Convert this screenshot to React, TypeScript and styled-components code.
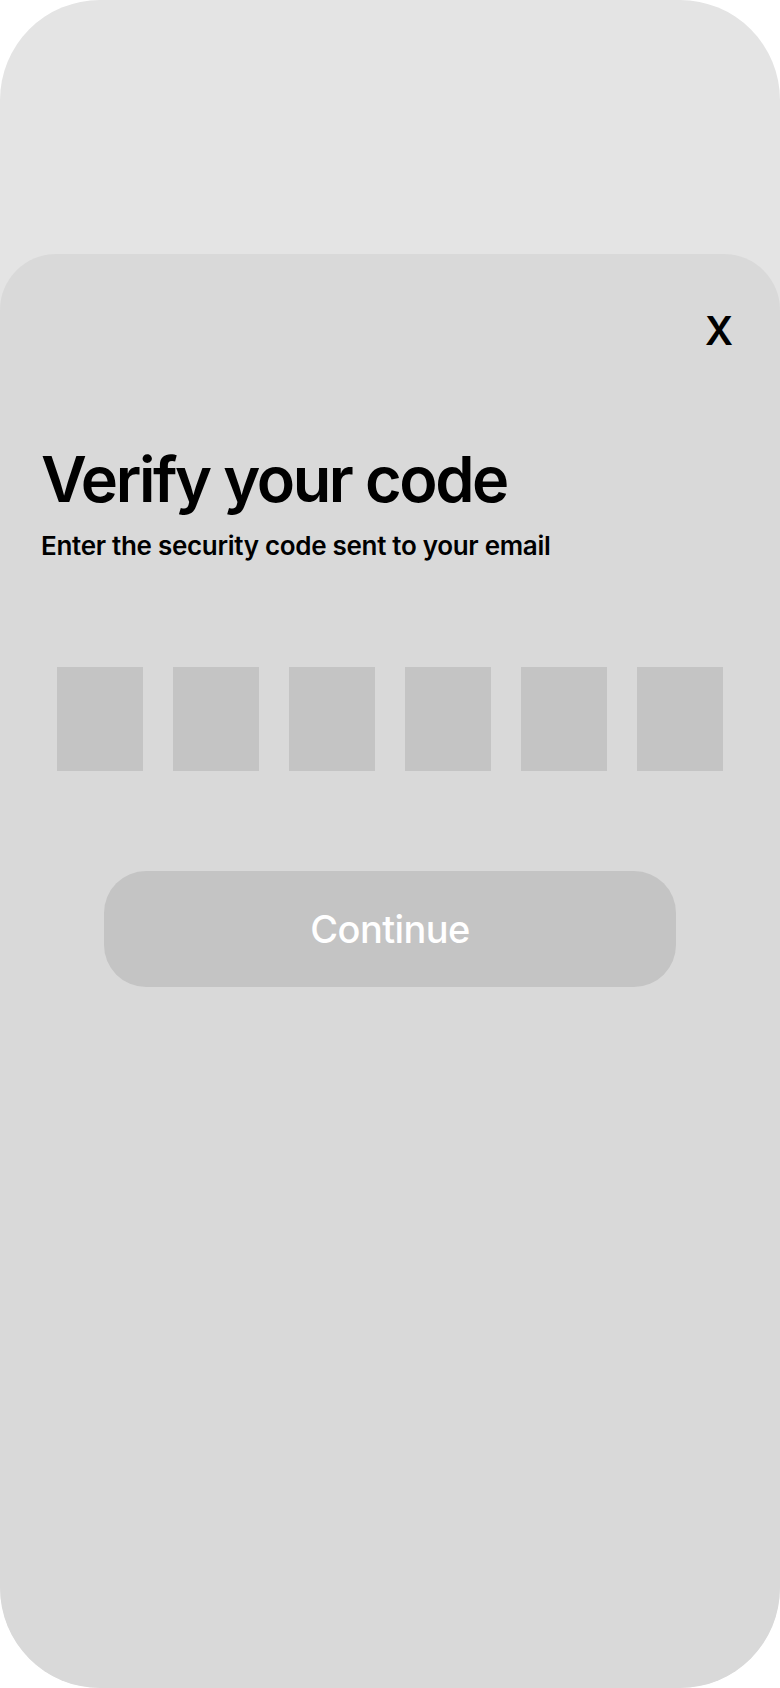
import React from "react";
import styled, { createGlobalStyle } from "styled-components";

const Global = createGlobalStyle`
  html, body { margin: 0; padding: 0; background: #ffffff; }
  body { font-family: Inter, "Noto Sans", sans-serif; }
  * { box-sizing: border-box; }
`;

const Frame = styled.div`
  width: 780px;
  height: 1688px;
  background: #e4e4e4;
  border-radius: 100px;
  overflow: hidden;
  padding-top: 254px;
  display: flex;
  flex-direction: column;
`;

const Sheet = styled.section`
  flex: 1;
  background: #d9d9d9;
  border-radius: 56px 56px 100px 100px;
  display: flex;
  flex-direction: column;
  padding: 57px 0 0;
`;

const CloseRow = styled.div`
  display: flex;
  justify-content: flex-end;
  padding-right: 47px;
`;

const CloseButton = styled.button`
  border: none;
  background: none;
  padding: 0;
  font-family: Inter, sans-serif;
  font-weight: 600;
  font-size: 39px;
  line-height: 1;
  color: #000;
  cursor: pointer;
`;

const Title = styled.h1`
  margin: 98px 0 0 41px;
  font-family: Inter, sans-serif;
  font-weight: 600;
  font-size: 63px;
  line-height: 1;
  letter-spacing: -2.4px;
  color: #000;
`;

const Subtitle = styled.p`
  margin: 22px 0 0 41px;
  font-family: Inter, sans-serif;
  font-weight: 600;
  font-size: 26px;
  line-height: 1;
  letter-spacing: -0.3px;
  color: #000;
`;

const CodeRow = styled.div`
  display: flex;
  justify-content: center;
  gap: 30px;
  margin-top: 108px;
`;

const CodeBox = styled.input`
  width: 86px;
  height: 104px;
  border: none;
  outline: none;
  background: #c4c4c4;
  padding: 0;
  text-align: center;
  font-family: Inter, sans-serif;
  font-size: 40px;
`;

const ButtonRow = styled.div`
  display: flex;
  justify-content: center;
  margin-top: 100px;
`;

const ContinueButton = styled.button`
  width: 572px;
  height: 116px;
  border: none;
  border-radius: 42px;
  background: #c4c4c4;
  color: #ffffff;
  font-family: Inter, sans-serif;
  font-weight: 500;
  font-size: 38px;
  letter-spacing: -0.6px;
  cursor: pointer;
`;

export default function App() {
  return (
    <>
      <Global />
      <Frame>
        <Sheet>
          <CloseRow>
            <CloseButton aria-label="Close">X</CloseButton>
          </CloseRow>
          <Title>Verify your code</Title>
          <Subtitle>Enter the security code sent to your email</Subtitle>
          <CodeRow>
            {Array.from({ length: 6 }).map((_, i) => (
              <CodeBox key={i} maxLength={1} aria-label={`Digit ${i + 1}`} />
            ))}
          </CodeRow>
          <ButtonRow>
            <ContinueButton>Continue</ContinueButton>
          </ButtonRow>
        </Sheet>
      </Frame>
    </>
  );
}
